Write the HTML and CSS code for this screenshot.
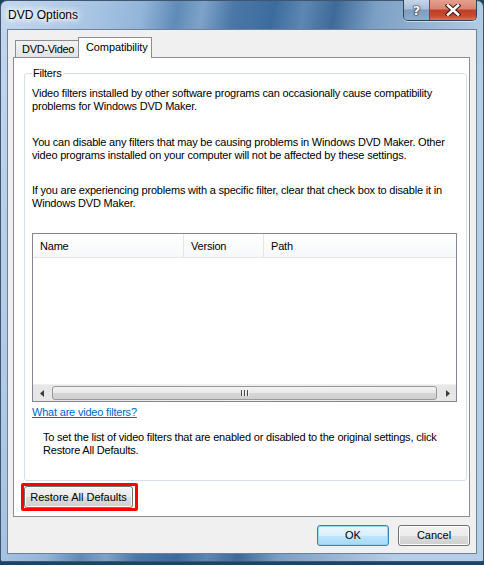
FILE: index.html
```html
<!DOCTYPE html>
<html>
<head>
<meta charset="utf-8">
<link rel="stylesheet" href="styles.css">
</head>
<body>
<div class="window">
  <div class="titlebar">
    <span class="title">DVD Options</span>
    <div class="caption-btns">
      <div class="cbtn help"><span class="q">?</span></div>
      <div class="cbtn close">
        <svg width="16" height="12" viewBox="0 0 16 12">
          <path d="M3 1.5 L13 10.5 M13 1.5 L3 10.5" stroke="#3a1b14" stroke-width="4.6" stroke-linecap="square" fill="none"/>
          <path d="M3 1.5 L13 10.5 M13 1.5 L3 10.5" stroke="#ffffff" stroke-width="2.6" stroke-linecap="square" fill="none"/>
        </svg>
      </div>
    </div>
  </div>
  <div class="client">
    <div class="tabs">
      <div class="tab">DVD-Video</div>
      <div class="tab active">Compatibility</div>
    </div>
    <div class="panel">
      <fieldset class="group">
        <legend>Filters</legend>
        <p class="p1">Video filters installed by other software programs can occasionally cause compatibility problems for Windows DVD Maker.</p>
        <p class="p2">You can disable any filters that may be causing problems in Windows DVD Maker. Other video programs installed on your computer will not be affected by these settings.</p>
        <p class="p3">If you are experiencing problems with a specific filter, clear that check box to disable it in Windows DVD Maker.</p>
        <div class="list">
          <div class="list-head">
            <div class="col c-name">Name</div>
            <div class="col c-ver">Version</div>
            <div class="col c-path">Path</div>
          </div>
          <div class="list-body"></div>
          <div class="hscroll">
            <div class="arrow">
              <svg width="4" height="7" viewBox="0 0 4 7"><path d="M4 0 L0 3.5 L4 7 Z" fill="#3b3b3b"/></svg>
            </div>
            <div class="track">
              <div class="thumb"><span class="grip"></span><span class="grip"></span><span class="grip"></span></div>
            </div>
            <div class="arrow">
              <svg width="4" height="7" viewBox="0 0 4 7"><path d="M0 0 L4 3.5 L0 7 Z" fill="#3b3b3b"/></svg>
            </div>
          </div>
        </div>
        <a class="link" href="#">What are video filters?</a>
        <p class="note">To set the list of video filters that are enabled or disabled to the original settings, click Restore All Defaults.</p>
      </fieldset>
      <div class="highlight"><button class="btn restore">Restore All Defaults</button></div>
    </div>
    <div class="dlg-btns">
      <button class="btn default">OK</button>
      <button class="btn">Cancel</button>
    </div>
  </div>
</div>
</body>
</html>
```

FILE: styles.css
```css
* { box-sizing: border-box; }
html, body {
  margin: 0;
  padding: 0;
}
body {
  width: 484px;
  height: 565px;
  background: #1d4563;
  font-family: "Liberation Sans", Arial, sans-serif;
  font-size: 11px;
  letter-spacing: -0.2px;
  color: #000;
  overflow: hidden;
}
.window {
  width: 484px;
  height: 562px;
  border: 1px solid #3f5670;
  border-radius: 7px 7px 2px 2px;
  background:
    linear-gradient(100deg,
      #c3d7ee 0px, #a9c5e4 90px, #93b5d9 140px,
      #5f8bb8 175px, #7ea3c9 200px, #4a78a8 230px,
      #3c6c9e 270px, #5d87b3 300px, #3e6a99 330px,
      #7b9fc4 370px, #95b3d3 420px, #b5cde6 484px);
  padding: 0 6px 7px 6px;
  display: flex;
  flex-direction: column;
}
.titlebar {
  height: 28px;
  display: flex;
  align-items: flex-start;
  justify-content: space-between;
  padding-left: 1px;
}
.title {
  margin-top: 7px;
  font-size: 12px;
  letter-spacing: 0;
  color: #000;
  text-shadow: 0 0 6px #fff, 0 0 8px #fff, 0 0 10px #fff, 0 0 4px #fff;
}
.caption-btns {
  display: flex;
  margin-top: -1px;
  border: 1px solid #2f4258;
  border-top: none;
  border-radius: 0 0 5px 5px;
  overflow: hidden;
  box-shadow: 0 1px 0 rgba(255,255,255,0.5);
}
.cbtn {
  height: 20px;
  display: flex;
  align-items: center;
  justify-content: center;
}
.help {
  width: 26px;
  background: linear-gradient(#c6d6e7 0%, #a9bfd6 45%, #7f9dbd 50%, #8eaccb 100%);
  border-right: 1px solid #44586e;
}
.help .q {
  font-family: "DejaVu Sans", sans-serif;
  font-weight: bold;
  font-size: 13px;
  color: #fff;
  text-shadow: 0 0 1px #223, 0 0 2px #223, 0 0 1px #223;
  margin-top: 1px;
}
.close {
  width: 46px;
  background: linear-gradient(#e5a090 0%, #d78571 45%, #c13d27 50%, #c94a2e 80%, #dc7450 100%);
}
.client {
  width: 470px;
  height: 525px;
  border: 1px solid #6f8196;
  background: #f0f0f0;
  padding: 7px 6px 0 5px;
  display: flex;
  flex-direction: column;
}
.tabs {
  display: flex;
  align-items: flex-end;
  height: 21px;
  padding-left: 2px;
  margin-bottom: -1px;
  position: relative;
  z-index: 1;
}
.tab {
  height: 17px;
  margin-bottom: 1px;
  padding: 2px 0 0 6px;
  border: 1px solid #898c95;
  border-bottom: none;
  background: linear-gradient(#f2f2f2, #e3e3e3);
  font-size: 11px;
  letter-spacing: -0.3px;
  line-height: 13px;
  width: 64px;
  white-space: nowrap;
}
.tab.active {
  height: 21px;
  margin-bottom: 0;
  margin-left: -1px;
  width: 74px;
  padding-top: 3px;
  padding-left: 7px;
  letter-spacing: -0.1px;
  background: #fff;
}
.panel {
  width: 457px;
  height: 460px;
  border: 1px solid #898c95;
  background: #fff;
  padding: 8px 2px 0 10px;
}
.group {
  margin: 0;
  height: 415px;
  border: 1px solid #d5dfe5;
  border-radius: 3px;
  padding: 0 7px 0 7px;
  min-width: 0;
}
.group legend {
  padding: 0 2px 0 1px;
  line-height: 14px;
  font-size: 11px;
}
.group p {
  margin: 0;
  line-height: 13px;
}
.p1 { margin-top: 7px !important; }
.p2 { margin-top: 23px !important; }
.p3 { margin-top: 22px !important; }
.list {
  margin-top: 23px;
  width: 425px;
  height: 169px;
  border: 1px solid #828790;
  background: #fff;
  display: flex;
  flex-direction: column;
}
.list-head {
  height: 24px;
  display: flex;
  background: linear-gradient(#ffffff, #f7f8f9);
  border-bottom: 1px solid #e5e5e5;
}
.col {
  padding: 6px 0 0 7px;
  line-height: 13px;
  border-right: 1px solid #e5e5e5;
}
.c-name { width: 151px; }
.c-ver { width: 80px; }
.c-path { flex: 1; border-right: none; }
.list-body { flex: 1; }
.hscroll {
  height: 17px;
  display: flex;
  background: linear-gradient(90deg, #e6e6e6, #efefef 50%, #e6e6e6);
  border-top: 1px solid #f0f0f0;
}
.arrow {
  width: 17px;
  display: flex;
  align-items: center;
  justify-content: center;
}
.track {
  flex: 1;
  padding: 1px 1px 1px 2px;
}
.thumb {
  height: 100%;
  border: 1px solid #989898;
  border-radius: 3px;
  background: linear-gradient(#f3f3f3 0%, #e8e8e8 50%, #d6d6d6 51%, #cfcfcf 100%);
  display: flex;
  justify-content: center;
  align-items: center;
  gap: 2px;
  margin-right: 1px;
}
.grip {
  width: 1px;
  height: 6px;
  background: #4a4a4a;
  box-shadow: 1px 0 0 #f4f4f4;
}
.link {
  display: block;
  margin-top: 4px;
  width: max-content;
  line-height: 13px;
  color: #0066cc;
  text-decoration: underline;
}
.note {
  margin-top: 12px !important;
  padding-left: 11px;
}
.highlight {
  margin: 2px 0 0 -3px;
  width: 117px;
  height: 28px;
  border: 3px solid #ff0000;
  border-radius: 2px;
}
.btn {
  font-family: "Liberation Sans", Arial, sans-serif;
  font-size: 11px;
  letter-spacing: 0;
  color: #000;
  border: 1px solid #707070;
  border-radius: 3px;
  background: linear-gradient(#f2f2f2 0%, #ebebeb 50%, #dddddd 51%, #cfcfcf 100%);
  box-shadow: inset 0 0 0 1px #fcfcfc;
  padding: 0;
  line-height: 13px;
}
.restore {
  display: block;
  width: 109px;
  height: 22px;
}
.dlg-btns {
  display: flex;
  justify-content: flex-end;
  gap: 9px;
  margin-top: 8px;
}
.dlg-btns .btn {
  width: 72px;
  height: 21px;
}
.btn.default {
  border-color: #3c7fb1;
  background: linear-gradient(#eaf6fd 0%, #d9f0fc 50%, #bee6fd 51%, #a7d9f5 100%);
  box-shadow: inset 0 0 0 1px #9ad4f1;
}
```
